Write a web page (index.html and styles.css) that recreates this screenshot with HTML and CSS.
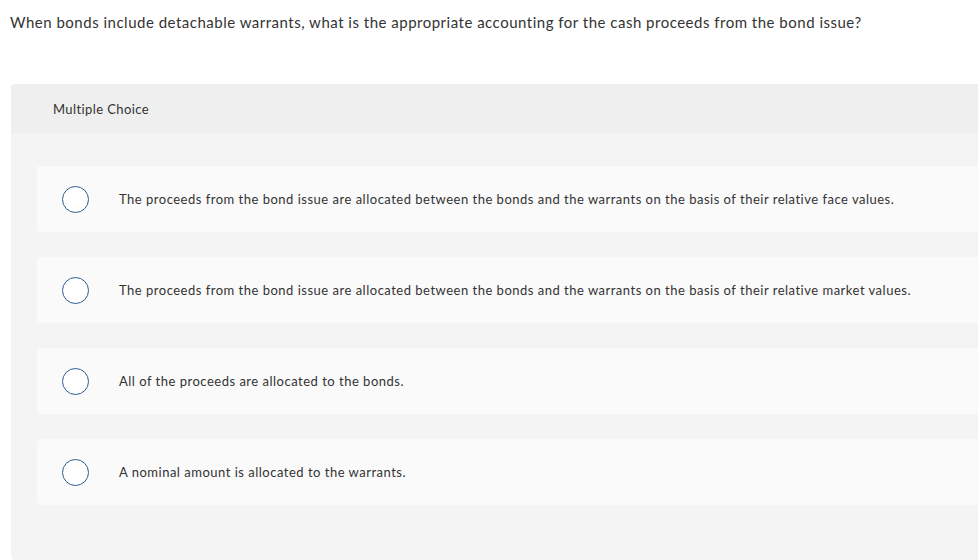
FILE: index.html
```html
<!DOCTYPE html>
<html>
<head>
<meta charset="utf-8">
<link rel="stylesheet" href="styles.css">
</head>
<body>
<p class="question">When bonds include detachable warrants, what is the appropriate accounting for the cash proceeds from the bond issue?</p>
<div class="panel">
  <div class="panel-head">Multiple Choice</div>
  <div class="panel-body">
    <div class="option"><span class="radio"></span><span class="label">The proceeds from the bond issue are allocated between the bonds and the warrants on the basis of their relative face values.</span></div>
    <div class="option"><span class="radio"></span><span class="label">The proceeds from the bond issue are allocated between the bonds and the warrants on the basis of their relative market values.</span></div>
    <div class="option"><span class="radio"></span><span class="label">All of the proceeds are allocated to the bonds.</span></div>
    <div class="option"><span class="radio"></span><span class="label">A nominal amount is allocated to the warrants.</span></div>
  </div>
</div>
</body>
</html>
```
FILE: styles.css
```css
html, body {
  margin: 0;
  padding: 0;
  background: #fff;
  overflow: hidden;
}
body {
  font-family: Lato, "Open Sans", Arial, sans-serif;
  color: #333;
  width: 978px;
  height: 560px;
}
.question {
  margin: 0;
  padding: 12px 0 0 10px;
  font-size: 15px;
  line-height: 20px;
  letter-spacing: 0.5px;
  height: 72px;
  box-sizing: border-box;
}
.panel {
  margin-left: 11px;
  margin-top: 12px;
  width: 1000px;
  border-radius: 4px;
  overflow: hidden;
  background: #f4f4f4;
}
.panel-head {
  background: #efefef;
  height: 50px;
  padding-left: 42px;
  display: flex;
  align-items: center;
  font-size: 13px;
  letter-spacing: 0.4px;
}
.panel-body {
  padding: 32px 0 55px 26px;
  display: flex;
  flex-direction: column;
  gap: 25px;
}
.option {
  background: #fafafa;
  height: 66px;
  border-radius: 3px;
  display: flex;
  align-items: center;
  padding-left: 25px;
  font-size: 13px;
  letter-spacing: 0.5px;
}
.radio {
  width: 25px;
  height: 25px;
  border: 1.5px solid #2c5d8f;
  border-radius: 50%;
  background: #fff;
  flex: none;
  margin-right: 30px;
}
```
